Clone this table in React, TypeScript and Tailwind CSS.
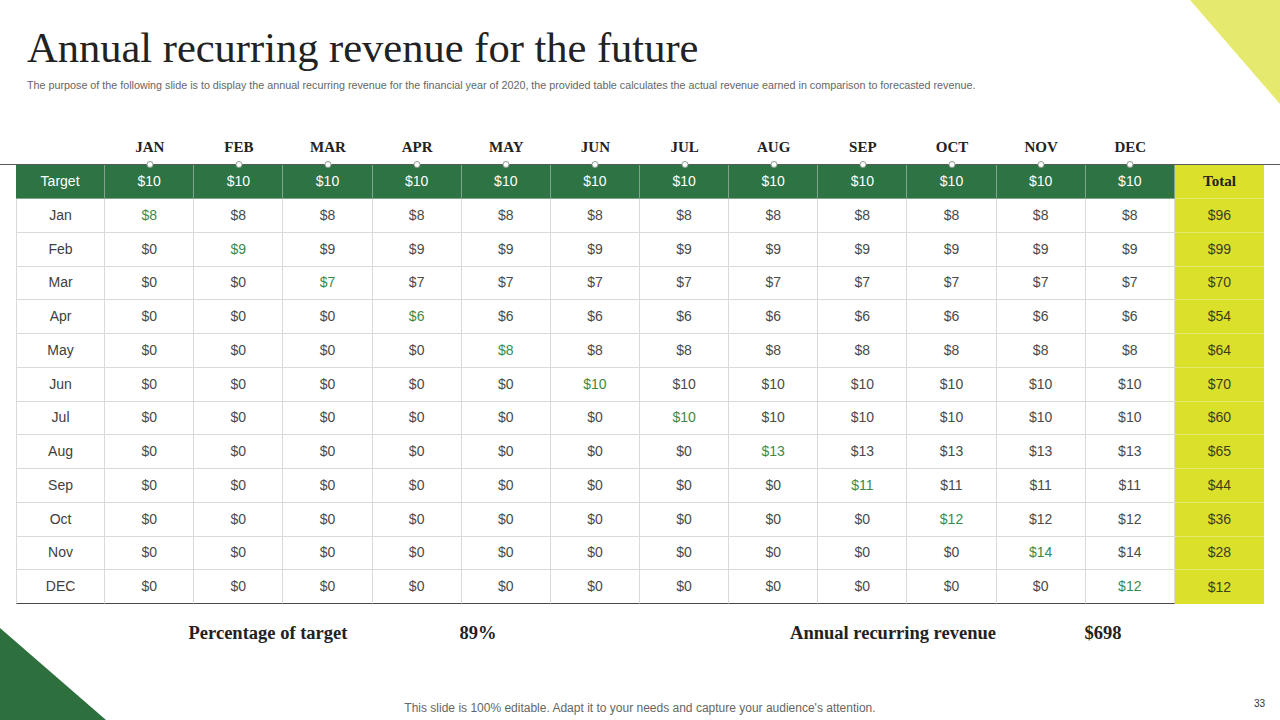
const months = ["JAN", "FEB", "MAR", "APR", "MAY", "JUN", "JUL", "AUG", "SEP", "OCT", "NOV", "DEC"];

const rows = [
  { label: "Jan", value: 8, total: 96 },
  { label: "Feb", value: 9, total: 99 },
  { label: "Mar", value: 7, total: 70 },
  { label: "Apr", value: 6, total: 54 },
  { label: "May", value: 8, total: 64 },
  { label: "Jun", value: 10, total: 70 },
  { label: "Jul", value: 10, total: 60 },
  { label: "Aug", value: 13, total: 65 },
  { label: "Sep", value: 11, total: 44 },
  { label: "Oct", value: 12, total: 36 },
  { label: "Nov", value: 14, total: 28 },
  { label: "DEC", value: 12, total: 12 },
];

const serif = "font-['Liberation_Serif','Times_New_Roman',serif]";
const sans = "font-['Liberation_Sans',Arial,sans-serif]";

export default function App() {
  return (
    <div className={`relative flex h-[720px] w-[1280px] flex-col overflow-hidden bg-white ${sans}`}>
      {/* decorative corners */}
      <svg className="absolute right-0 top-0" width="90" height="104" viewBox="0 0 90 104">
        <polygon points="0,0 90,0 90,104" fill="#e5e96e" />
      </svg>
      <svg className="absolute bottom-0 left-0" width="106" height="92" viewBox="0 0 106 92">
        <polygon points="0,0 0,92 106,92" fill="#2e6f3e" />
      </svg>

      <div className="pl-[27px] pt-[24px]">
        <h1 className={`text-[42.5px] leading-[48px] text-[#222] ${serif}`}>
          Annual recurring revenue for the future
        </h1>
        <p className="mt-[6px] text-[10.75px] leading-[14px] text-[#666]">
          The purpose of the following slide is to display the annual recurring revenue for the financial year of 2020, the provided table calculates the actual revenue earned in comparison to forecasted revenue.
        </p>
      </div>

      {/* month labels on the timeline */}
      <div className="mt-[46px] border-b border-[#5a5a5a]">
        <div className="mx-[16px] grid h-[26px] grid-cols-14">
          <div />
          {months.map((m) => (
            <div key={m} className="relative flex justify-center">
              <span className={`text-[15px] font-bold leading-[18px] text-[#222] ${serif}`}>{m}</span>
              <span className="absolute bottom-[-4px] left-1/2 h-[7px] w-[7px] -translate-x-1/2 rounded-full border border-[#8a9a8e] bg-white" />
            </div>
          ))}
          <div />
        </div>
      </div>

      {/* table */}
      <div className="mx-[16px] grid grid-cols-14 text-[14px]">
        <div className="flex h-[34px] items-center justify-center border-r border-b border-[#7fa58a] bg-[#2e7343] text-white">
          Target
        </div>
        {months.map((m) => (
          <div
            key={m}
            className="flex h-[34px] items-center justify-center border-r border-b border-[#7fa58a] bg-[#2e7343] text-white"
          >
            $10
          </div>
        ))}
        <div className={`flex h-[34px] items-center justify-center border-b border-[#e4e86e] bg-[#dbe02a] text-[15px] font-bold text-[#222] ${serif}`}>
          Total
        </div>

        {rows.map((row, i) => {
          const last = i === rows.length - 1;
          const bottom = last ? "border-b border-b-[#4a4a4a]" : "border-b border-b-[#dadada]";
          return [
            <div
              key={row.label}
              className={`flex h-[33.75px] items-center justify-center border-l border-r border-[#dadada] ${bottom} text-[#404040]`}
            >
              {row.label}
            </div>,
            ...months.map((m, c) => {
              const v = c < i ? 0 : row.value;
              const color = c === i ? "text-[#3c8a45]" : "text-[#4a4a4a]";
              return (
                <div
                  key={row.label + m}
                  className={`flex h-[33.75px] items-center justify-center border-r border-[#dadada] ${bottom} ${color}`}
                >
                  ${v}
                </div>
              );
            }),
            <div
              key={row.label + "total"}
              className={`flex h-[33.75px] items-center justify-center bg-[#dbe02a] text-[#3b3f1a] ${last ? "" : "border-b border-[#e4e86e]"}`}
            >
              ${row.total}
            </div>,
          ];
        })}
      </div>

      {/* summary */}
      <div className={`mt-[17px] flex h-[24px] items-center whitespace-nowrap text-[18.5px] font-bold leading-[24px] text-[#222] ${serif}`}>
        <div className="ml-[168px] w-[200px] text-center">Percentage of target</div>
        <div className="ml-[60px] w-[100px] text-center">89%</div>
        <div className="ml-[245px] w-[240px] text-center">Annual recurring revenue</div>
        <div className="ml-[40px] w-[100px] text-center">$698</div>
      </div>

      <div className="relative mt-[56px] text-center text-[12px] leading-[14px] text-[#666]">
        This slide is 100% editable. Adapt it to your needs and capture your audience's attention.
        <span className="absolute right-[15px] top-[-4px] text-[10px] text-[#333]">33</span>
      </div>
    </div>
  );
}
